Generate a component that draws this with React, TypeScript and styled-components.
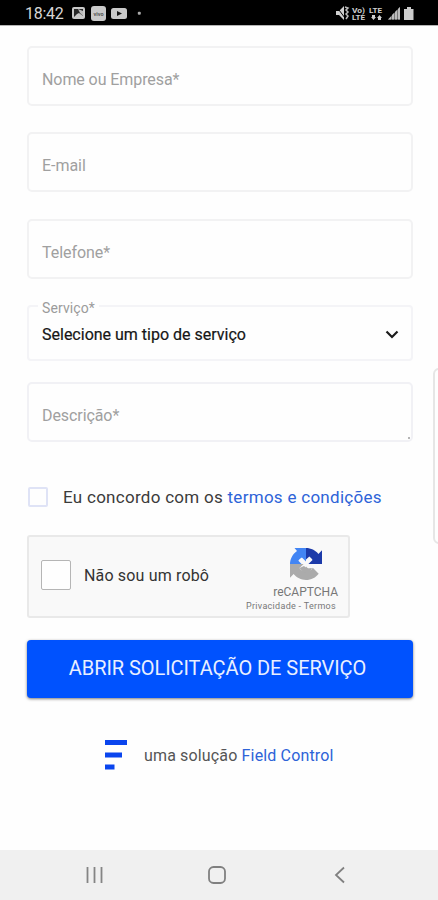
import React from "react";
import styled, { createGlobalStyle } from "styled-components";

const GlobalStyle = createGlobalStyle`
  * { box-sizing: border-box; }
  body { margin: 0; background: #fefefe; font-family: Roboto, sans-serif; }
`;

const Screen = styled.div`
  position: relative;
  display: flex;
  flex-direction: column;
  width: 438px;
  height: 900px;
  overflow: hidden;
  background: #fefefe;
`;

const StatusBar = styled.header`
  display: flex;
  justify-content: space-between;
  height: 25px;
  flex: none;
  padding: 0 22px 0 25px;
  background: #000;
  color: #d6d6d6;
  box-shadow: 0 1px 0 #b5b5b5;
`;

const StatusGroup = styled.div`
  display: flex;
  align-items: center;
  height: 26px;
`;

const Clock = styled.span`
  width: 46px;
  font-size: 16px;
  line-height: 27px;
  letter-spacing: -0.25px;
`;

const Form = styled.main`
  display: flex;
  flex-direction: column;
  flex: 1;
  padding: 21px 25px 0 27px;
`;

const Field = styled.label<{ $gap: number }>`
  display: flex;
  align-items: center;
  flex: none;
  height: 60px;
  margin-bottom: ${(p) => p.$gap}px;
  padding: 7px 13px 0;
  border: 2px solid #f2f2f3;
  border-radius: 5px;
  color: #a0a0a0;
  font-size: 16px;
`;

const TextArea = styled(Field)`
  position: relative;
  border-color: #f1f1f5;
`;

const Grip = styled.span`
  position: absolute;
  right: 1px;
  bottom: 1px;
  width: 2px;
  height: 2px;
  background: #b5b5b5;
`;

const Select = styled.div`
  position: relative;
  display: flex;
  align-items: center;
  justify-content: space-between;
  flex: none;
  height: 56px;
  margin-bottom: 21px;
  padding: 3px 12px 0 13px;
  border: 2px solid #f4f4f7;
  border-radius: 4px;
  color: #161616;
  font-size: 16px;
  -webkit-text-stroke: 0.2px #161616;
`;

const Legend = styled.span`
  position: absolute;
  left: 9px;
  top: -8px;
  padding: 0 4px;
  background: #fefefe;
  color: #9b9b9b;
  font-size: 14px;
  line-height: 18px;
  letter-spacing: 0.1px;
  -webkit-text-stroke: 0;
`;

const Label = styled.span<{ $spacing?: number }>`
  white-space: nowrap;
  letter-spacing: ${(p) => p.$spacing ?? 0}px;
`;

const Terms = styled.div`
  display: flex;
  align-items: center;
  gap: 15px;
  height: 22px;
  margin: 44px 0 27px 1px;
  color: #3b3b3b;
  font-size: 17px;
`;

const Box = styled.span<{ $size: number; $color: string; $line: number }>`
  flex: none;
  width: ${(p) => p.$size}px;
  height: ${(p) => p.$size}px;
  border: ${(p) => p.$line}px solid ${(p) => p.$color};
  border-radius: 2px;
  background: #fefefe;
`;

const Link = styled.a`
  color: #2d63d8;
`;

const Captcha = styled.section`
  display: flex;
  align-items: center;
  flex: none;
  width: 323px;
  height: 83px;
  padding: 0 10px 0 12px;
  border: 2px solid #e9e9e9;
  border-radius: 3px;
  background: #f9f9f9;
  color: #333;
  font-size: 16px;
`;

const CaptchaCheck = styled.div`
  display: flex;
  flex: 1;
  align-items: center;
  gap: 13px;
  padding-bottom: 4px;
  line-height: 1;
  ${Label} { padding-top: 2px; }
`;

const Brand = styled.div`
  display: flex;
  flex-direction: column;
  align-items: flex-end;
  height: 100%;
  padding-top: 11px;
  color: #777;
  svg { margin-right: 16px; }
`;

const BrandName = styled.span`
  margin-top: 5px;
  font-size: 12px;
  line-height: 15px;
`;

const BrandLinks = styled.span`
  margin-right: 2px;
  font-size: 9px;
  line-height: 12px;
  letter-spacing: 0.3px;
  white-space: nowrap;
`;

const Submit = styled.button`
  flex: none;
  height: 58px;
  margin-top: 22px;
  padding: 0 5px 2px 0;
  border: 0;
  border-radius: 4px;
  background: #0052fe;
  box-shadow: 0 1px 3px rgba(40, 35, 30, 0.6);
  color: #e9efff;
  font: 20px Roboto, sans-serif;
  letter-spacing: -0.06px;
  white-space: nowrap;
`;

const Credit = styled.footer`
  display: flex;
  align-items: center;
  gap: 17px;
  margin: 41px 0 0 78px;
  color: #555;
  font-size: 16px;
`;

const ScrollHandle = styled.div`
  position: absolute;
  left: 433px;
  top: 368px;
  width: 12px;
  height: 176px;
  border: 2px solid #e6e6e6;
  border-radius: 6px;
`;

const NavBar = styled.nav`
  display: flex;
  align-items: center;
  justify-content: space-between;
  flex: none;
  height: 50px;
  padding: 0 91px 0 84px;
  background: #f0f0f0;
  svg:nth-child(2) { margin-right: 3px; }
`;

const NoticeIcons = () => (
  <svg width="80" height="18" viewBox="0 0 80 18">
    <rect x="1" y="3" width="13" height="12" rx="2" fill="#c9c9c9" />
    <path d="M3 5h9v7l-4-3-2 1-3 3z" fill="#292929" />
    <path d="M7 5l5 2v5l-3-3z" fill="#bcbcbc" />
    <rect x="20" y="2" width="15" height="15" rx="3" fill="#c9c9c9" />
    <text x="27.5" y="11.5" textAnchor="middle" fontFamily="Roboto, sans-serif" fontSize="5.5" fontWeight="700" fill="#555">vivo</text>
    <rect x="40" y="4" width="16" height="11" rx="2.5" fill="#c9c9c9" />
    <path d="M46 7l5 2.5-5 2.5z" fill="#161616" />
    <rect x="66.8" y="7.7" width="3" height="3" rx="1" fill="#aaa" />
  </svg>
);

const SignalIcons = () => (
  <svg width="81" height="18" viewBox="0 0 81 18" fontFamily="Roboto, sans-serif" fontWeight="700" fill="#d0d0d0">
    <path d="M1 7h3l5-5v14l-5-5H1z" />
    <path d="M1 2l9 12" stroke="#000" strokeWidth="1" />
    <path d="M10 3l3 1-2 2 2 2-2 2 2 2-2 3" fill="none" stroke="#bbb" strokeWidth="1.5" />
    <text x="17" y="8.5" fontSize="6.5" textLength="13" lengthAdjust="spacingAndGlyphs">Vo)</text>
    <text x="17" y="16.3" fontSize="6.5" textLength="13" lengthAdjust="spacingAndGlyphs">LTE</text>
    <text x="34" y="9" fontSize="8" textLength="13" lengthAdjust="spacingAndGlyphs">LTE</text>
    <path d="M37 11h3v2h1l-2.5 3-2.5-3h1zM43 16h3v-2h1l-2.5-3-2.5 3h1z" />
    <path d="M53 15.5L65 3v12.5z" fill="#777" />
    <path d="M53 15.5l3-3v3zM57 15.5v-4.500l2-2v6.500zM60 15.500V8l2-2v9.500zM63 15.500V5l2-2v12.500z" fill="#bbb" />
    <path d="M69 5h3V3h4v2h2.5v11H69z" fill="#ccc" />
  </svg>
);

const RecaptchaLogo = () => (
  <svg width="32" height="32" viewBox="0 0 32 32">
    <path fill="#4285f4" d="M16 0H4.500L7 3C2.800 6 0 11 0 16h11.500l-3.100-3.300c.8-1.200 1.700-2.200 3.500-3.200L16 13.600z" />
    <path fill="#1c3aa9" d="M16 0c5 0 9.400 2.300 12.400 5.900L32 2.300V16H18.400l4.100-4.100c-1-1.800-2-2.700-3.200-3.500L16 11.500z" />
    <path fill="#ababab" d="M0 16v13.700l3.600-3.600C6.600 29.700 11 32 16 32c5.200 0 9.800-2.500 12.700-6.300l-5.900-5.900c-.6 1.100-1.400 2-2.400 2.700L16 18.400l-2.200 5.100c-1.800-.6-3.300-1.700-4.300-3.400l4.100-4.100z" />
    <path fill="#ababab" d="M9.500 20.100l4.500-2 3 2.500 5-.5-2 4-6 1z" />
  </svg>
);

export default function App() {
  return (
    <>
      <GlobalStyle />
      <Screen>
        <StatusBar>
          <StatusGroup>
            <Clock>18:42</Clock>
            <NoticeIcons />
          </StatusGroup>
          <StatusGroup>
            <SignalIcons />
          </StatusGroup>
        </StatusBar>

        <Form>
          <Field $gap={26}><Label $spacing={-0.08}>Nome ou Empresa*</Label></Field>
          <Field $gap={27}><Label $spacing={-0.05}>E-mail</Label></Field>
          <Field $gap={26}><Label $spacing={-0.05}>Telefone*</Label></Field>
          <Select>
            <Legend>Serviço*</Legend>
            <Label>Selecione um tipo de serviço</Label>
            <svg width="14" height="10" viewBox="0 0 14 10">
              <path d="M1.5 1.5L7 7l5.5-5.5" fill="none" stroke="#1b1b1b" strokeWidth="2.2" />
            </svg>
          </Select>
          <TextArea $gap={0}>
            <Label $spacing={-0.08}>Descrição*</Label>
            <Grip />
          </TextArea>

          <Terms>
            <Box $size={20} $line={2} $color="#dfe3f6" />
            <Label $spacing={0.28}>
              Eu concordo com os <Link>termos e condições</Link>
            </Label>
          </Terms>

          <Captcha>
            <CaptchaCheck>
              <Box $size={30} $line={1.5} $color="#b5b5b5" />
              <Label $spacing={0.16}>Não sou um robô</Label>
            </CaptchaCheck>
            <Brand>
              <RecaptchaLogo />
              <BrandName>reCAPTCHA</BrandName>
              <BrandLinks>Privacidade - Termos</BrandLinks>
            </Brand>
          </Captcha>

          <Submit>ABRIR SOLICITAÇÃO DE SERVIÇO</Submit>

          <Credit>
            <svg width="22" height="32" viewBox="0 0 22 32" fill="#0a45ee">
              <path d="M0 1h22v5H0zM0 13.5h17v5H0zM0 25.5h9.5v5H0z" />
            </svg>
            <Label $spacing={0.15}>
              uma solução <Link>Field Control</Link>
            </Label>
          </Credit>
        </Form>

        <ScrollHandle />

        <NavBar>
          <svg width="20" height="18" viewBox="0 0 20 18" stroke="#858585" strokeWidth="1.8">
            <path d="M3.5 1v16M10.5 1v16M17.5 1v16" />
          </svg>
          <svg width="20" height="20" viewBox="0 0 20 20">
            <rect x="2" y="2" width="16" height="16" rx="4.5" fill="none" stroke="#808080" strokeWidth="1.8" />
          </svg>
          <svg width="14" height="18" viewBox="0 0 14 18">
            <path d="M11 1.5L3 9l8 7.5" fill="none" stroke="#808080" strokeWidth="1.8" />
          </svg>
        </NavBar>
      </Screen>
    </>
  );
}
